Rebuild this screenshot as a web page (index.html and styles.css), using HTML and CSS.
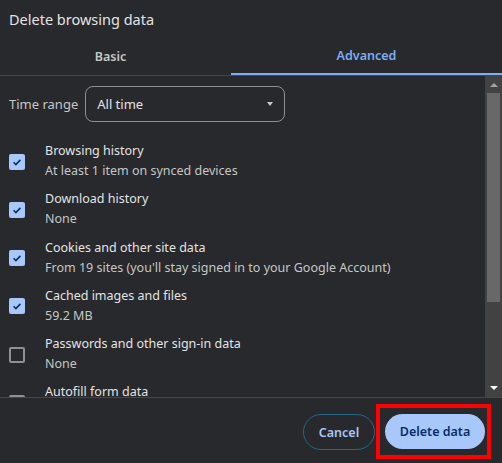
FILE: index.html
```html
<!DOCTYPE html>
<html lang="en">
<head>
    <meta charset="UTF-8">
    <title>Delete browsing data</title>
    <link rel="stylesheet" href="styles.css">
</head>
<body>
    <div class="dialog">
        <h1 class="titulo">Delete browsing data</h1>

        <div class="tabs">
            <div class="tab">Basic</div>
            <div class="tab active">Advanced</div>
        </div>

        <div class="corpo">
            <div class="lista">
                <div class="periodo">
                    <span>Time range</span>
                    <div class="select">
                        <span>All time</span>
                        <span class="seta"></span>
                    </div>
                </div>

                <div class="item">
                    <span class="caixa marcada"><svg viewBox="0 0 16 16" width="16" height="16"><path d="M4.6 8.2l2.3 2.3 4.5-4.6" fill="none" stroke="#062e6f" stroke-width="1.6"/></svg></span>
                    <div class="texto">
                        <p class="nome">Browsing history</p>
                        <p class="info">At least 1 item on synced devices</p>
                    </div>
                </div>

                <div class="item">
                    <span class="caixa marcada"><svg viewBox="0 0 16 16" width="16" height="16"><path d="M4.6 8.2l2.3 2.3 4.5-4.6" fill="none" stroke="#062e6f" stroke-width="1.6"/></svg></span>
                    <div class="texto">
                        <p class="nome">Download history</p>
                        <p class="info">None</p>
                    </div>
                </div>

                <div class="item">
                    <span class="caixa marcada"><svg viewBox="0 0 16 16" width="16" height="16"><path d="M4.6 8.2l2.3 2.3 4.5-4.6" fill="none" stroke="#062e6f" stroke-width="1.6"/></svg></span>
                    <div class="texto">
                        <p class="nome">Cookies and other site data</p>
                        <p class="info">From 19 sites (you'll stay signed in to your Google Account)</p>
                    </div>
                </div>

                <div class="item">
                    <span class="caixa marcada"><svg viewBox="0 0 16 16" width="16" height="16"><path d="M4.6 8.2l2.3 2.3 4.5-4.6" fill="none" stroke="#062e6f" stroke-width="1.6"/></svg></span>
                    <div class="texto">
                        <p class="nome">Cached images and files</p>
                        <p class="info">59.2 MB</p>
                    </div>
                </div>

                <div class="item">
                    <span class="caixa"></span>
                    <div class="texto">
                        <p class="nome">Passwords and other sign-in data</p>
                        <p class="info">None</p>
                    </div>
                </div>

                <div class="item">
                    <span class="caixa"></span>
                    <div class="texto">
                        <p class="nome">Autofill form data</p>
                        <p class="info">None</p>
                    </div>
                </div>
            </div>

            <div class="rolagem">
                <span class="seta-cima"></span>
                <div class="trilho">
                    <div class="polegar"></div>
                </div>
                <span class="seta-baixo"></span>
            </div>
        </div>

        <div class="rodape">
            <button class="btn cancelar">Cancel</button>
            <div class="destaque">
                <button class="btn apagar">Delete data</button>
            </div>
        </div>
    </div>
</body>
</html>
```

FILE: styles.css
```css
* {
    margin: 0;
    padding: 0;
    box-sizing: border-box;
}

body {
    font-family: "Noto Sans", "Open Sans", sans-serif;
    background-color: #28292c;
    color: #e3e3e3;
    width: 502px;
    height: 463px;
    overflow: hidden;
}

.dialog {
    display: flex;
    flex-direction: column;
    height: 463px;
}

.titulo {
    font-size: 14.5px;
    font-weight: normal;
    color: #e3e3e3;
    padding: 9px 0 0 9px;
    height: 36px;
}

.tabs {
    display: grid;
    grid-template-columns: 231px 1fr;
    height: 40px;
    border-bottom: 1px solid #444649;
}

.tab {
    display: flex;
    align-items: center;
    justify-content: center;
    font-size: 12.5px;
    font-weight: 600;
    color: #c4c7c5;
    padding-top: 1px;
    padding-right: 10px;
}

.tab.active {
    color: #7cacf8;
    padding-right: 0;
    border-bottom: 2px solid #7cacf8;
}

.corpo {
    display: flex;
    height: 322px;
    border-bottom: 1px solid #444649;
    overflow: hidden;
}

.lista {
    flex: 1;
    padding-left: 9px;
    overflow: hidden;
}

.periodo {
    display: flex;
    align-items: center;
    gap: 7px;
    margin-top: 10px;
    font-size: 13px;
    color: #c4c7c5;
}

.select {
    display: flex;
    align-items: center;
    justify-content: space-between;
    width: 200px;
    height: 36px;
    border: 1px solid #8e918f;
    border-radius: 8px;
    padding: 0 11px 0 11px;
    color: #e3e3e3;
}

.seta {
    width: 0;
    height: 0;
    border-left: 3.5px solid transparent;
    border-right: 3.5px solid transparent;
    border-top: 4px solid #c4c7c5;
}

.item {
    display: flex;
    align-items: center;
    gap: 20px;
    height: 40px;
    margin-top: 8.3px;
}

.periodo + .item {
    margin-top: 19px;
}

.caixa {
    width: 16px;
    height: 16px;
    border: 2px solid #8e918f;
    border-radius: 2px;
    flex-shrink: 0;
    margin-top: 1px;
}

.caixa.marcada {
    border: none;
    background-color: #a8c7fa;
}

.caixa svg {
    display: block;
}

.nome {
    font-size: 12.5px;
    line-height: 20px;
    color: #e3e3e3;
}

.info {
    font-size: 12.5px;
    line-height: 20px;
    color: #c4c7c5;
}

.rolagem {
    width: 17px;
    margin-left: 1px;
    background-color: #424242;
    display: flex;
    flex-direction: column;
    align-items: center;
}

.seta-cima {
    margin-top: 7px;
    width: 0;
    height: 0;
    border-left: 4px solid transparent;
    border-right: 4px solid transparent;
    border-bottom: 4px solid #a3a3a3;
}

.trilho {
    flex: 1;
    width: 100%;
    padding: 6px 2px 0 2px;
}

.polegar {
    height: 209px;
    background-color: #686868;
}

.seta-baixo {
    margin-bottom: 7px;
    width: 0;
    height: 0;
    border-left: 4px solid transparent;
    border-right: 4px solid transparent;
    border-top: 4px solid #ffffff;
}

.rodape {
    flex: 1;
    display: flex;
    justify-content: flex-end;
    align-items: flex-start;
    padding: 6px 11px 0 0;
    gap: 1px;
}

.btn {
    font-family: "Noto Sans", "Open Sans", sans-serif;
    font-size: 12.5px;
    font-weight: 600;
    height: 36px;
    border-radius: 18px;
    cursor: pointer;
}

.cancelar {
    margin-top: 10px;
    width: 72px;
    background-color: transparent;
    border: 1px solid #1d6a8a;
    color: #a8c7fa;
}

.destaque {
    border: 4px solid #ff0000;
    padding: 6px 2px 5px 5px;
    height: 55px;
}

.apagar {
    width: 100px;
    height: 35px;
    background-color: #a8c7fa;
    border: none;
    color: #062e6f;
}
```
